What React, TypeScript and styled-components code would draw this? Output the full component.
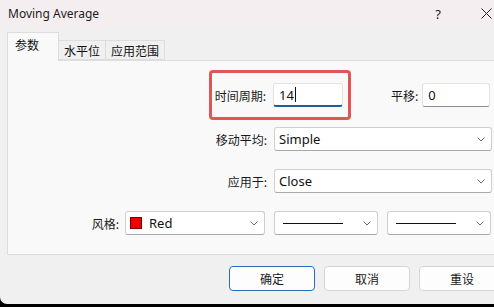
import styled, { createGlobalStyle } from "styled-components";

const Global = createGlobalStyle`
  html, body {
    margin: 0;
    padding: 0;
    background: #000;
    overflow: hidden;
  }
  body {
    font-family: "Segoe UI", "Noto Sans", "Noto Sans CJK SC", sans-serif;
    font-size: 12px;
    color: #1a1a1a;
  }
`;

const Window = styled.div`
  width: 494px;
  height: 304px;
  background: #f0f0f0;
  border-bottom-left-radius: 7px;
  overflow: hidden;
  display: flex;
  flex-direction: column;
`;

const TitleBar = styled.div`
  height: 27px;
  flex: none;
  background: #f4eef0;
  display: flex;
  align-items: center;
  padding-left: 8px;
  font-size: 12px;
  color: #1c1c1c;
`;

const Title = styled.span`
  flex: 1;
`;

const HelpButton = styled.span`
  width: 20px;
  text-align: center;
  color: #222;
  font-size: 13px;
`;

const CloseButton = styled.span`
  width: 46px;
  display: flex;
  justify-content: flex-end;
  padding-right: 2px;
  box-sizing: border-box;
`;

const Body = styled.div`
  padding: 9px 0 0 7px;
`;

const Tabs = styled.div`
  display: flex;
  align-items: flex-end;
  height: 24px;
  position: relative;
  z-index: 1;
`;

const Tab = styled.div<{ $active?: boolean }>`
  height: ${(p) => (p.$active ? 25 : 18)}px;
  margin-bottom: ${(p) => (p.$active ? -1 : 0)}px;
  padding: ${(p) => (p.$active ? "3px 19px 0 7px" : "0 5px 0 5px")};
  display: flex;
  align-items: ${(p) => (p.$active ? "flex-start" : "center")};
  background: ${(p) => (p.$active ? "#f9f9f9" : "#f0f0f0")};
  border: 1px solid #dddddd;
  border-bottom: ${(p) => (p.$active ? "none" : "1px solid #dddddd")};
  border-left: ${(p) => (p.$active ? "1px solid #dddddd" : "none")};
  font-family: "Noto Sans CJK SC", sans-serif;
  font-size: 12px;
  color: #111;
`;

const Panel = styled.div`
  height: 193px;
  background: #f9f9f9;
  border: 1px solid #dddddd;
  border-right: none;
  display: flex;
  flex-direction: column;
`;

const Row = styled.div<{ $top: number }>`
  display: flex;
  align-items: center;
  margin-top: ${(p) => p.$top}px;
`;

const Label = styled.div<{ $w?: number; $ml?: number }>`
  width: ${(p) => (p.$w ? `${p.$w}px` : "auto")};
  margin-left: ${(p) => p.$ml ?? 0}px;
  flex: none;
  text-align: right;
  font-family: "Noto Sans CJK SC", sans-serif;
  font-size: 12px;
  color: #1a1a1a;
`;

const Highlight = styled.div`
  margin-left: 201px;
  width: 142px;
  height: 50px;
  box-sizing: border-box;
  border: 3px solid #e25555;
  border-radius: 4px;
  display: flex;
  align-items: center;
  justify-content: flex-end;
  padding-right: 5px;
  gap: 7px;
  flex: none;
`;

const Input = styled.div<{ $w: number; $focus?: boolean; $ml?: number }>`
  width: ${(p) => p.$w}px;
  margin-left: ${(p) => p.$ml ?? 0}px;
  height: 24px;
  box-sizing: border-box;
  background: #fff;
  border: 1px solid #e2e2e2;
  border-bottom: ${(p) => (p.$focus ? "2px solid #1f5f99" : "1px solid #8d8d8d")};
  border-radius: 3px;
  display: flex;
  align-items: center;
  padding-left: 5px;
  font-size: 13px;
  color: #111;
  flex: none;
`;

const Caret = styled.span`
  display: inline-block;
  width: 1px;
  height: 15px;
  background: #111;
  margin-left: 1px;
`;

const Select = styled.div<{ $w: number; $ml?: number }>`
  width: ${(p) => p.$w}px;
  margin-left: ${(p) => p.$ml ?? 0}px;
  height: 24px;
  box-sizing: border-box;
  background: #fff;
  border: 1px solid #cfcfcf;
  border-bottom-color: #a9a9a9;
  border-radius: 3px;
  display: flex;
  align-items: center;
  padding: 0 6px 0 4px;
  gap: 6px;
  font-size: 13px;
  color: #111;
  flex: none;
`;

const SelectText = styled.span`
  flex: 1;
  display: flex;
  align-items: center;
  gap: 7px;
`;

const Swatch = styled.span`
  width: 12px;
  height: 12px;
  background: #f00000;
  border: 1px solid #7a0000;
  box-sizing: border-box;
`;

const LineSample = styled.span`
  flex: 1;
  height: 1px;
  background: #111;
  margin: 0 14px 0 4px;
`;

const Footer = styled.div`
  display: flex;
  gap: 9px;
  padding: 11px 0 0 229px;
`;

const Button = styled.div<{ $primary?: boolean }>`
  width: 86px;
  flex: none;
  height: 25px;
  box-sizing: border-box;
  background: #fdfdfd;
  border: 1px solid ${(p) => (p.$primary ? "#2b6cb0" : "#d5d5d5")};
  border-radius: 4px;
  display: flex;
  align-items: center;
  justify-content: center;
  font-family: "Noto Sans CJK SC", sans-serif;
  font-size: 12px;
  color: #1a1a1a;
`;

const Chevron = () => (
  <svg width="8" height="5" viewBox="0 0 8 5">
    <polyline points="0.5,0.5 4,4 7.5,0.5" fill="none" stroke="#6a6a6a" strokeWidth="1" />
  </svg>
);

export default function App() {
  return (
    <>
      <Global />
      <Window>
        <TitleBar>
          <Title>Moving Average</Title>
          <HelpButton>?</HelpButton>
          <CloseButton>
            <svg width="11" height="11" viewBox="0 0 11 11">
              <path d="M0.5 0.5 L10.5 10.5 M10.5 0.5 L0.5 10.5" stroke="#222" strokeWidth="1" />
            </svg>
          </CloseButton>
        </TitleBar>
        <Body>
          <Tabs>
            <Tab $active>参数</Tab>
            <Tab>水平位</Tab>
            <Tab>应用范围</Tab>
          </Tabs>
          <Panel>
            <Row $top={9}>
              <Highlight>
                <Label>时间周期:</Label>
                <Input $w={70} $focus>
                  14<Caret />
                </Input>
              </Highlight>
              <Label $ml={40}>平移:</Label>
              <Input $w={68} $ml={4}>0</Input>
            </Row>
            <Row $top={7}>
              <Label $w={259}>移动平均:</Label>
              <Select $w={218} $ml={7}>
                <SelectText>Simple</SelectText>
                <Chevron />
              </Select>
            </Row>
            <Row $top={18}>
              <Label $w={259}>应用于:</Label>
              <Select $w={218} $ml={7}>
                <SelectText>Close</SelectText>
                <Chevron />
              </Select>
            </Row>
            <Row $top={18}>
              <Label $w={111}>风格:</Label>
              <Select $w={140} $ml={6}>
                <SelectText>
                  <Swatch />
                  Red
                </SelectText>
                <Chevron />
              </Select>
              <Select $w={104} $ml={9}>
                <LineSample />
                <Chevron />
              </Select>
              <Select $w={104} $ml={9}>
                <LineSample />
                <Chevron />
              </Select>
            </Row>
          </Panel>
        </Body>
        <Footer>
          <Button $primary>确定</Button>
          <Button>取消</Button>
          <Button>重设</Button>
        </Footer>
      </Window>
    </>
  );
}
